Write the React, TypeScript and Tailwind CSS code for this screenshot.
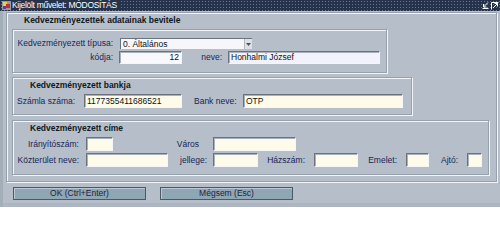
import React from "react";

const font = "font-['Liberation_Sans',Arial,sans-serif]";

// sunken edit box like the old Oracle Forms fields
function Field({
  w,
  value,
  bg = "bg-[#fffbea]",
  right = false,
}: {
  w: string;
  value?: string;
  bg?: string;
  right?: boolean;
}) {
  return (
    <div
      className={`${w} ${bg} h-full border-t border-l border-t-[#6a737c] border-l-[#6a737c] border-b border-r border-b-[#f4f6f8] border-r-[#f4f6f8] shadow-[inset_1px_1px_0_#a9b2ba] flex items-center px-[2px] text-[8.5px] text-[#101010] ${right ? "justify-end" : ""}`}
    >
      {value}
    </div>
  );
}

function Label({ w, text, cls = "text-right" }: { w: string; text: string; cls?: string }) {
  return (
    <span className={`${w} ${cls} shrink-0 text-[8.5px] text-[#182456] whitespace-nowrap`}>{text}</span>
  );
}

function GroupBox({ w, h, mt, children }: { w: string; h: string; mt: string; children: React.ReactNode }) {
  return (
    <div
      className={`${w} ${h} ${mt} ml-[5px] shrink-0 border border-[#97a1ab] shadow-[1px_1px_0_#f2f5f7,inset_1px_1px_0_#f2f5f7] flex flex-col`}
    >
      {children}
    </div>
  );
}

export default function App() {
  return (
    <div className={`w-[500px] h-[207px] min-h-[207px] overflow-hidden bg-[#b6bfc9] flex flex-col ${font} leading-none`}>
      {/* title bar */}
      <div className="h-[11px] shrink-0 flex items-center bg-[#26324a] bg-[radial-gradient(circle,#6b7a92_0.7px,transparent_0.9px)] bg-[length:3px_3px]">
        <svg width="9" height="9" viewBox="0 0 9 9" className="ml-[2px]">
          <rect x="0" y="0" width="9" height="9" fill="#9a9a9a" />
          <rect x="1" y="1" width="4" height="4" fill="#e8d040" />
          <rect x="4" y="3" width="4" height="4" fill="#c03030" />
          <rect x="1" y="5" width="3" height="3" fill="#6040a0" />
        </svg>
        <span className="ml-[1px] text-[8.5px] text-white tracking-[-0.3px] bg-[#26324a] pr-[2px]">
          Kijelölt művelet: MÓDOSÍTÁS
        </span>
        <div className="flex-1" />
        <svg width="7" height="7" viewBox="0 0 7 7" className="mr-[2px]">
          <path d="M6 0.5 L1.5 5 M1.5 2 V5 H4.5 M0.5 6.5 H6.5" stroke="#fff" strokeWidth="1" fill="none" />
        </svg>
        <svg width="8" height="8" viewBox="0 0 8 8" className="mr-[1px]">
          <path d="M0.5 7.5 V0.5 H7.5 M2 6 L6.5 1.5 M3.5 1.5 H6.5 V4.5" stroke="#fff" strokeWidth="1" fill="none" />
        </svg>
      </div>

      <div className="flex h-[196px] shrink-0 border-l-[3px] border-[#a4aeb8] bg-[#b6bfc9]">
        <div className="flex flex-col flex-1">
          {/* outer frame */}
          <div className="ml-[3px] mt-[1px] w-[491px] h-[170px] shrink-0 border border-[#97a1ab] shadow-[1px_1px_0_#f2f5f7,inset_1px_1px_0_#f2f5f7] flex flex-col">
            <div className="mt-[2px] h-[11px] flex items-center pl-[17px] text-[8.5px] font-bold text-[#101820]">
              Kedvezményezettek adatainak bevitele
            </div>

            {/* beneficiary */}
            <GroupBox w="w-[375px]" h="h-[44px]" mt="mt-[3px]">
              <div className="mt-[8px] h-[11px] flex items-center">
                <Label w="w-[100px]" text="Kedvezményezett típusa:" />
                <div className="ml-[7px] w-[132px] h-full bg-[#f6f6fb] border-t border-l border-[#6a737c] border-b-[#f4f6f8] border-r-[#f4f6f8] flex items-center">
                  <span className="pl-[2px] text-[8.5px] text-[#101010] flex-1">0. Általános</span>
                  <div className="w-[8px] h-full bg-[#dde0e4] border-l border-[#b0b8c0] flex items-center justify-center">
                    <svg width="5" height="3" viewBox="0 0 5 3">
                      <path d="M0 0 H5 L2.5 3 Z" fill="#505050" />
                    </svg>
                  </div>
                </div>
              </div>
              <div className="mt-[2px] h-[13px] flex items-center">
                <Label w="w-[100px]" text="kódja:" />
                <div className="ml-[6px] h-full">
                  <Field w="w-[63px]" value="12" bg="bg-[#f8f8fd]" right />
                </div>
                <Label w="w-[40px]" text="neve:" />
                <div className="ml-[6px] h-full">
                  <Field w="w-[152px]" value="Honhalmi József" bg="bg-[#f2f2fc]" />
                </div>
              </div>
            </GroupBox>

            {/* bank */}
            <GroupBox w="w-[400px]" h="h-[38px]" mt="mt-[4px]">
              <div className="mt-[2px] h-[10px] flex items-center pl-[17px] text-[8.5px] font-bold text-[#101820]">
                Kedvezményezett bankja
              </div>
              <div className="mt-[4px] h-[14px] flex items-center">
                <Label w="w-[71px]" cls="pl-[4px] text-left" text="Számla száma:" />
                <div className="h-full">
                  <Field w="w-[98px]" value="1177355411686521" />
                </div>
                <Label w="w-[61px]" cls="pl-[12px] text-left" text="Bank neve:" />
                <div className="h-full">
                  <Field w="w-[160px]" value="OTP" />
                </div>
              </div>
            </GroupBox>

            {/* address */}
            <GroupBox w="w-[477px]" h="h-[55px]" mt="mt-[5px]">
              <div className="mt-[2px] h-[10px] flex items-center pl-[17px] text-[8.5px] font-bold text-[#101820]">
                Kedvezményezett címe
              </div>
              <div className="mt-[4px] h-[14px] flex items-center">
                <Label w="w-[66px]" text="Irányítószám:" />
                <div className="ml-[7px] h-full">
                  <Field w="w-[27px]" />
                </div>
                <Label w="w-[86px]" text="Város" />
                <div className="ml-[14px] h-full">
                  <Field w="w-[83px]" />
                </div>
              </div>
              <div className="mt-[2px] h-[14px] flex items-center">
                <Label w="w-[66px]" text="Közterület neve:" />
                <div className="ml-[7px] h-full">
                  <Field w="w-[82px]" />
                </div>
                <Label w="w-[39px]" text="jellege:" />
                <div className="ml-[6px] h-full">
                  <Field w="w-[45px]" />
                </div>
                <Label w="w-[47px]" text="Házszám:" />
                <div className="ml-[9px] h-full">
                  <Field w="w-[44px]" />
                </div>
                <Label w="w-[39px]" text="Emelet:" />
                <div className="ml-[9px] h-full">
                  <Field w="w-[23px]" />
                </div>
                <Label w="w-[29px]" text="Ajtó:" />
                <div className="ml-[9px] h-full">
                  <Field w="w-[15px]" />
                </div>
              </div>
            </GroupBox>
          </div>

          {/* buttons */}
          <div className="mt-[5px] h-[13px] shrink-0 flex ml-[10px] gap-[14px]">
            <button className="w-[133px] h-full bg-[#8fa6b4] border border-[#4e5862] shadow-[inset_1px_1px_0_#b8c8d2] text-[8.5px] text-[#1a2440] flex items-center justify-center">
              OK (Ctrl+Enter)
            </button>
            <button className="w-[133px] h-full bg-[#8fa6b4] border border-[#4e5862] shadow-[inset_1px_1px_0_#b8c8d2] text-[8.5px] text-[#1a2440] flex items-center justify-center">
              Mégsem (Esc)
            </button>
          </div>
          <div className="h-[3px] shrink-0" />
          <div className="h-[4px] shrink-0 bg-[#aeb7c1]" />
        </div>
      </div>
    </div>
  );
}
